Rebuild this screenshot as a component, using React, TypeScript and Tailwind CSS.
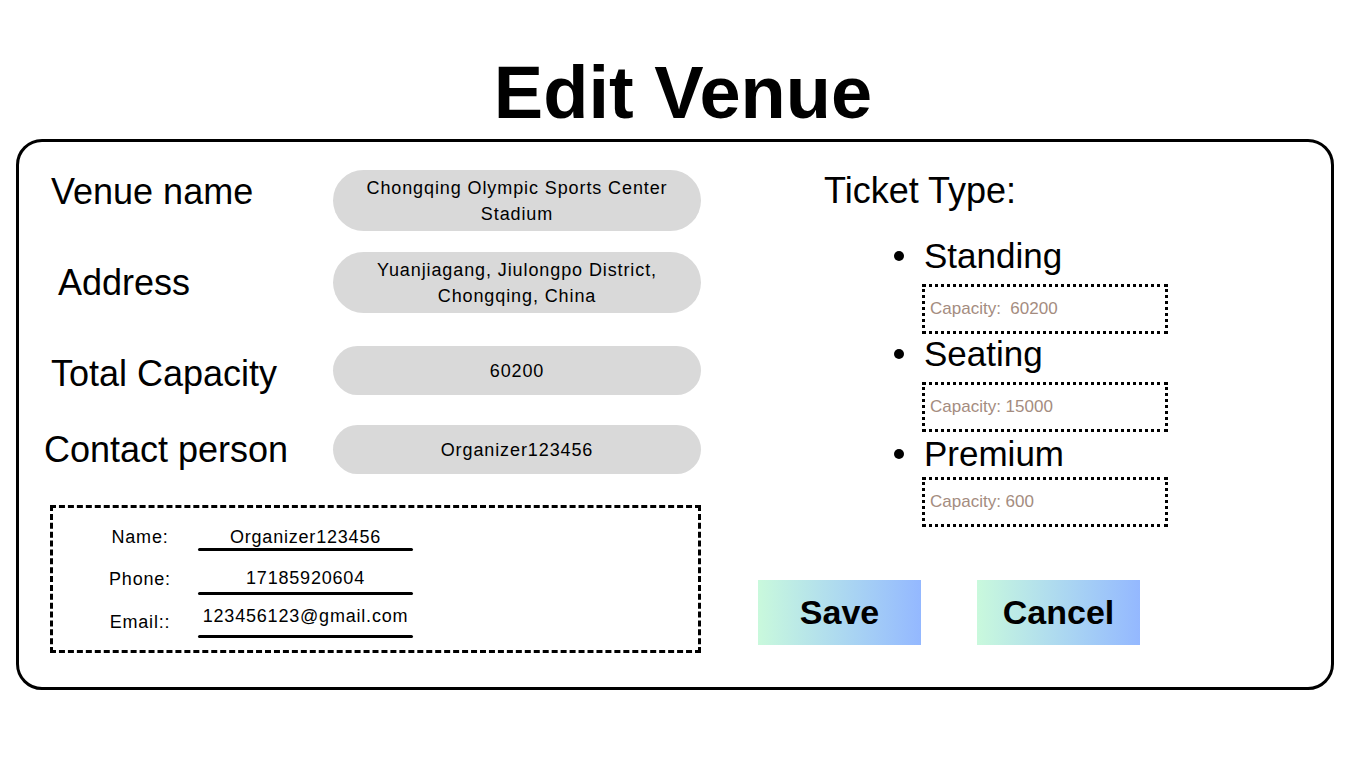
const font = { fontFamily: '"Liberation Sans", Arial, sans-serif' };

const fields = [
  { label: "Venue name", value: ["Chongqing Olympic Sports Center", "Stadium"], h: "h-[61px]", pad: "pl-[32px]", lift: "mb-[18px]", mt: "mt-[28px]" },
  { label: "Address", value: ["Yuanjiagang, Jiulongpo District,", "Chongqing, China"], h: "h-[61px]", pad: "pl-[39px]", lift: "", mt: "mt-[21px]" },
  { label: "Total Capacity", value: ["60200"], h: "h-[49px]", pad: "pl-[32px]", lift: "mt-[6px]", mt: "mt-[33px]" },
  { label: "Contact person", value: ["Organizer123456"], h: "h-[49px]", pad: "pl-[25px]", lift: "", mt: "mt-[30px]" },
];

const contact = [
  { label: "Name:", value: "Organizer123456", mt: "mt-[18px]", lmt: "mt-0", pb: "pb-0" },
  { label: "Phone:", value: "17185920604", mt: "mt-[16px]", lmt: "mt-[1px]", pb: "pb-[3px]" },
  { label: "Email::", value: "123456123@gmail.com", mt: "mt-[10px]", lmt: "mt-[6px]", pb: "pb-[8px]" },
];

const tickets = [
  { name: "Standing", cap: "Capacity:  60200", mt: "mt-[28px]", boxMt: "mt-[9px]" },
  { name: "Seating", cap: "Capacity: 15000", mt: "mt-[1px]", boxMt: "mt-[9px]" },
  { name: "Premium", cap: "Capacity: 600", mt: "mt-[3px]", boxMt: "mt-[4px]" },
];

export default function App() {
  return (
    <div className="min-h-screen w-full bg-white text-black" style={font}>
      {/* Title */}
      <h1 className="pt-[56px] text-center text-[74px] font-bold leading-none">Edit Venue</h1>

      {/* Card */}
      <div className="mt-[9px] ml-[16px] flex w-[1318px] rounded-[26px] border-[3px] border-black">
        {/* Left column */}
        <div className="flex w-[720px] flex-col pb-[34px]">
          {fields.map((f) => (
            <div key={f.label} className={`flex items-center ${f.mt}`}>
              <div className={`w-[314px] text-[36px] leading-[40px] ${f.pad} ${f.lift}`}>{f.label}</div>
              <div className={`flex w-[368px] flex-col items-center justify-center rounded-full bg-[#d9d9d9] ${f.h}`}>
                {f.value.map((v) => (
                  <span key={v} className="text-[18px] leading-[26px] tracking-[0.9px]">{v}</span>
                ))}
              </div>
            </div>
          ))}

          {/* Contact details */}
          <div className="mt-[31px] ml-[31px] w-[651px] border-[3px] border-dashed border-black pb-[12px]">
            {contact.map((c) => (
              <div key={c.label} className={`flex items-start ${c.mt}`}>
                <div className={`ml-[37px] w-[100px] text-center text-[18px] leading-[22px] tracking-[0.8px] ${c.lmt}`}>{c.label}</div>
                <div className="ml-[8px] w-[215px]">
                  <div className={`text-center text-[18px] leading-[22px] tracking-[0.8px] ${c.pb}`}>{c.value}</div>
                  <div className="h-[3px] w-full rounded-full bg-black" />
                </div>
              </div>
            ))}
          </div>
        </div>

        {/* Right column */}
        <div className="flex flex-1 flex-col">
          <div className="mt-[31px] pl-[85px] text-[36px] leading-[36px]">Ticket Type:</div>

          <div className="pl-[183px]">
            {tickets.map((t) => (
              <div key={t.name} className={t.mt}>
                <div className="-ml-[28px] flex items-center gap-[18px]">
                  <span className="h-[10px] w-[10px] rounded-full bg-black" />
                  <span className="ml-[2px] text-[35px] leading-[38px]">{t.name}</span>
                </div>
                <div className={`flex h-[50px] w-[246px] items-center border-[3px] border-dotted border-black pl-[5px] ${t.boxMt}`}>
                  <span className="whitespace-pre text-[17px] text-[#a48c80]">{t.cap}</span>
                </div>
              </div>
            ))}
          </div>

          <div className="mt-[53px] ml-[19px] flex gap-[56px]">
            {["Save", "Cancel"].map((b) => (
              <button
                key={b}
                className="flex h-[65px] w-[163px] items-center justify-center bg-gradient-to-r from-[#c9f9dc] to-[#94b8ff] text-[34px] font-bold"
              >
                {b}
              </button>
            ))}
          </div>
        </div>
      </div>
    </div>
  );
}
